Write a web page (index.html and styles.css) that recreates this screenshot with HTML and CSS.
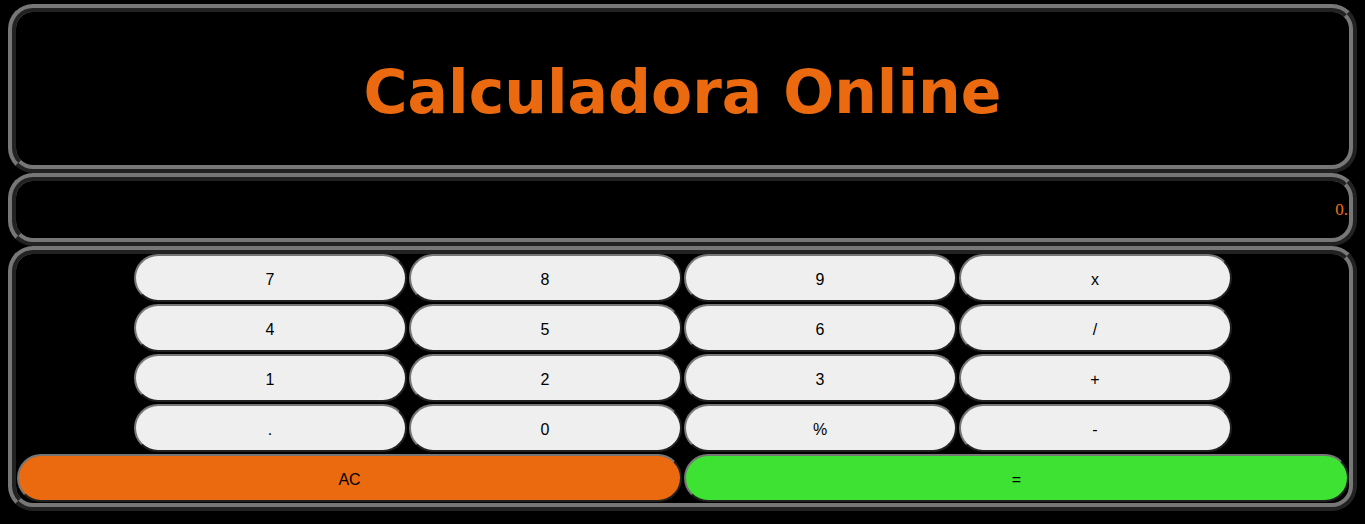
FILE: index.html
```html
<!DOCTYPE html>
<html lang="pt">
<head>
<meta charset="utf-8">
<title>Calculadora Online</title>
<link rel="stylesheet" href="styles.css">
</head>
<body>
<header class="panel header">
  <h1 class="title">Calculadora Online</h1>
</header>
<section class="panel display">
  <span class="display-value">0.</span>
</section>
<section class="panel keypad">
  <div class="keys">
    <button class="key">7</button>
    <button class="key">8</button>
    <button class="key">9</button>
    <button class="key">x</button>
    <button class="key">4</button>
    <button class="key">5</button>
    <button class="key">6</button>
    <button class="key">/</button>
    <button class="key">1</button>
    <button class="key">2</button>
    <button class="key">3</button>
    <button class="key">+</button>
    <button class="key">.</button>
    <button class="key">0</button>
    <button class="key">%</button>
    <button class="key">-</button>
  </div>
  <div class="actions">
    <button class="key key-clear">AC</button>
    <button class="key key-equals">=</button>
  </div>
</section>
</body>
</html>
```

FILE: styles.css
```css
html, body {
  background: #000;
}
body {
  margin: 4px 8px 0 8px;
  font-family: "Liberation Serif", serif;
}
.panel {
  border: 8px ridge #777;
  border-radius: 25px;
  background: #000;
  box-sizing: border-box;
}
.header {
  height: 169px;
  display: flex;
  align-items: center;
  justify-content: center;
  padding-top: 6px;
}
.title {
  margin: 0;
  font-family: "DejaVu Sans", Verdana, sans-serif;
  font-weight: bold;
  font-size: 60px;
  color: #eb6a10;
}
.display {
  height: 73px;
  display: flex;
  align-items: center;
  justify-content: flex-end;
  padding-right: 1px;
}
.display-value {
  color: #f07212;
  font-family: "Liberation Serif", serif;
  font-size: 17px;
}
.keypad {
  height: 265px;
  display: flex;
  flex-direction: column;
  gap: 2px;
}
.keys {
  display: grid;
  grid-template-columns: repeat(4, 273px);
  grid-auto-rows: 48px;
  gap: 2px;
  justify-content: center;
}
.actions {
  display: grid;
  grid-template-columns: 1fr 1fr;
  grid-auto-rows: 48px;
  gap: 2px;
  padding-left: 1px;
}
.key {
  margin: 0;
  padding: 3px 0 0 0;
  border: 2px outset #767676;
  border-radius: 25px;
  background: #efefef;
  color: #000;
  font-family: "Liberation Sans", Arial, sans-serif;
  font-size: 16px;
}
.key-clear {
  background: #eb6a10;
}
.key-equals {
  background: #3ee232;
}
```
